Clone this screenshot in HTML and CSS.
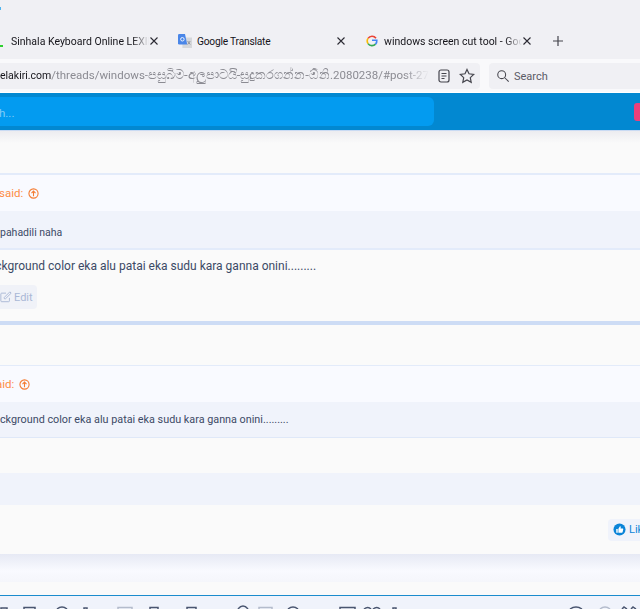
FILE: index.html
```html
<!DOCTYPE html>
<html lang="en">
<head>
  <meta charset="UTF-8">
  <meta name="viewport" content="width=device-width, initial-scale=1.0">
  <title>windows screen cut tool</title>
  <link rel="stylesheet" href="styles.css">
</head>
<body>
  <div class="tabbar">
    <span class="app-dot"></span>
    <div class="tab tab-first">
      <span class="audio-dot"></span>
      <span class="tab-title fade">Sinhala Keyboard Online LEXILOGOS</span>
      <svg class="tab-close" viewBox="0 0 10 10"><path d="M1.500 1.500l7 7M8.500 1.500l-7 7"/></svg>
    </div>
    <div class="tab tab-second">
      <svg class="favicon" viewBox="0 0 16 16">
        <rect x="5" y="4" width="11" height="12" fill="#d5d7db"/>
        <path d="M0 1.500Q0 0 1.500 0H8l2.500 12H1.500Q0 12 0 10.500z" fill="#4a86e8"/>
        <circle cx="5" cy="6" r="2" fill="none" stroke="#fff" stroke-width="1"/>
        <path d="M11 8l3 4M14 8l-3 4" stroke="#8a8d93" stroke-width="1"/>
      </svg>
      <span class="tab-title title-short">Google Translate</span>
      <svg class="tab-close" viewBox="0 0 10 10"><path d="M1.500 1.500l7 7M8.500 1.500l-7 7"/></svg>
    </div>
    <div class="tab tab-third">
      <svg class="favicon favicon-g" viewBox="0 0 16 16" fill="none" stroke-width="2.200">
        <path d="M13.300 4.200A6.500 6.500 0 0 0 2.700 4.500" stroke="#ea4335"/>
        <path d="M2.700 4.500a6.500 6.500 0 0 0 0 7" stroke="#fbbc05"/>
        <path d="M2.700 11.500a6.500 6.500 0 0 0 10 .6" stroke="#34a853"/>
        <path d="M12.700 12.100A6.500 6.500 0 0 0 14.400 7H8" stroke="#4285f4"/>
      </svg>
      <span class="tab-title fade">windows screen cut tool - Google Search</span>
      <svg class="tab-close" viewBox="0 0 10 10"><path d="M1.500 1.500l7 7M8.500 1.500l-7 7"/></svg>
    </div>
    <svg class="new-tab" viewBox="0 0 12 12"><path d="M6 1v10M1 6h10"/></svg>
  </div>

  <div class="toolbar">
    <div class="urlbar">
      <span class="url"><b>elakiri.com</b>/threads/windows-<span class="si">පසුබිම-අලුපාටයි-සුදුකරගන්න-ඕනි</span>.2080238/#post-27</span>
      <svg class="bar-icon" viewBox="0 0 16 16"><rect x="3" y="2" width="10" height="12" rx="2"/><path d="M5.500 5.500h5M5.500 8h5M5.500 10.500h3"/></svg>
      <svg class="bar-icon star" viewBox="0 0 16 16"><path d="M8 1.500l2 4.300 4.700.6-3.400 3.200.9 4.700L8 12l-4.200 2.300.9-4.700L1.300 6.400 6 5.800z"/></svg>
    </div>
    <div class="searchbar">
      <svg class="bar-icon" viewBox="0 0 16 16"><circle cx="6.500" cy="6.500" r="4.500"/><path d="M10 10l4.500 4.500"/></svg>
      <span class="search-label">Search</span>
    </div>
  </div>

  <header class="site-nav">
    <div class="site-search">h...</div>
    <div class="nav-badge"></div>
  </header>

  <main class="page">
    <div class="gap-top"></div>

    <div class="reply-head first">
      <span class="said">said:</span>
      <svg class="up-icon" viewBox="0 0 12 12"><circle cx="6" cy="6" r="5"/><path d="M6 9V3.500M3.800 5.600L6 3.400l2.200 2.200"/></svg>
    </div>
    <div class="quote-line first-quote"><span>pahadili naha</span></div>
    <div class="post-body">
      <p class="post-text">background color eka alu patai eka sudu kara ganna onini.........</p>
      <div class="post-actions">
        <span class="edit-btn">
          <svg viewBox="0 0 14 14"><path d="M11 8v3.500a1 1 0 0 1-1 1H2a1 1 0 0 1-1-1v-8a1 1 0 0 1 1-1h5"/><path d="M5 7.500L11.500 1l1.500 1.500L6.500 9H5z"/></svg>
          Edit
        </span>
      </div>
    </div>
    <div class="post-sep"></div>

    <div class="gap-mid"></div>
    <div class="reply-head second">
      <span class="said">said:</span>
      <svg class="up-icon" viewBox="0 0 12 12"><circle cx="6" cy="6" r="5"/><path d="M6 9V3.500M3.800 5.600L6 3.400l2.200 2.200"/></svg>
    </div>
    <div class="quote-line second-quote"><span>background color eka alu patai eka sudu kara ganna onini.........</span></div>
    <div class="empty-row"></div>
    <div class="tint-row"></div>
    <div class="like-row">
      <span class="like-btn">
        <svg viewBox="0 0 14 14"><circle cx="7" cy="7" r="6.500" fill="#0a84d8"/><path d="M3.500 6.500h1.600v4H3.500zM5.800 10.500V6.300L7.500 3.500c.8 0 1 .7.800 1.500l-.2 1h2.200c.6 0 .8.500.7 1l-.6 2.800c-.1.400-.4.700-.8.700z" fill="#fff"/></svg>
        Like
      </span>
    </div>
    <div class="shadow-band"></div>
    <div class="gap-bottom"></div>
  </main>

  <div class="editor-bar">
    <!-- only the top edge of the editor buttons is in view -->
    <svg class="editor-icons" viewBox="0 0 640 13">
      <path d="M1 13v-1h6v1M24 13v-1.500h11V13M57 13q5-4 10 0M84 13v-1h3v1M150 13v-1.500h8V13M187 13v-1.500h9V13M238 13q5-6 10 0M288 13q5-4 10 0M340 13v-1.500h15V13M364 13q4-3 7 0M373 13q4-3 7 0M393 13v-1h3v1M570 13q6-4 12 0M622 13l2-2 3 2M631 13l2-2 3 2"/>
      <path class="light" d="M118 13v-1.500h14V13M259 13v-1.500h13V13M600 13q5-4 10 0"/>
    </svg>
  </div>
</body>
</html>
```

FILE: styles.css
```css
html, body {
  margin: 0;
  padding: 0;
  height: 609px;
  overflow: hidden;
}

body {
  font-family: Roboto, "Noto Sans", sans-serif;
  background-color: #fafafa;
  color: #3c4a66;
  width: 640px;
}

.tabbar {
  height: 59px;
  background-color: #f0f0f4;
  display: flex;
  align-items: flex-end;
  font-size: 10.500px;
  color: #15141a;
  box-sizing: border-box;
  padding-bottom: 6px;
  position: relative;
}

.app-dot {
  position: absolute;
  left: 0;
  top: 7px;
  width: 1px;
  height: 3px;
  background-color: #4db4f0;
}

.audio-dot {
  position: absolute;
  left: 0;
  top: 45px;
  width: 3px;
  height: 2px;
  background-color: #2fd02f;
}

.tab {
  display: flex;
  align-items: center;
  height: 24px;
  flex: none;
}

.tab-first {
  width: 160px;
  padding-left: 11px;
  box-sizing: border-box;
}

.tab-second {
  width: 187px;
  padding-left: 18px;
  box-sizing: border-box;
}

.tab-third {
  width: 186px;
  padding-left: 19px;
  box-sizing: border-box;
}

.tab-title {
  flex: 1;
  min-width: 0;
  white-space: nowrap;
  overflow: hidden;
}

.title-short {
  font-size: 10.200px;
  letter-spacing: -0.200px;
}

.fade {
  -webkit-mask-image: linear-gradient(to right, #000 88%, transparent);
  mask-image: linear-gradient(to right, #000 88%, transparent);
}

.favicon {
  width: 14px;
  height: 14px;
  margin-right: 5px;
  flex: none;
}

.favicon-g {
  width: 12px;
  height: 12px;
  margin-right: 6px;
}

.tab-close {
  width: 10px;
  height: 10px;
  flex: none;
  fill: none;
  stroke: #2b2a33;
  stroke-width: 1.100;
  margin-right: 1px;
}

.new-tab {
  width: 12px;
  height: 12px;
  margin: 0 0 6px 19px;
  fill: none;
  stroke: #45454d;
  stroke-width: 1.200;
}

.toolbar {
  height: 33px;
  background-color: #f9f9fb;
  display: flex;
  align-items: center;
  gap: 9px;
  border-bottom: 1px solid #fff;
  box-sizing: content-box;
  font-size: 11px;
}

.urlbar {
  width: 480px;
  height: 26px;
  background-color: #f0f0f4;
  border-radius: 0 4px 4px 0;
  display: flex;
  align-items: center;
  flex: none;
  padding-right: 5px;
  box-sizing: border-box;
}

.url {
  flex: 1;
  min-width: 0;
  white-space: nowrap;
  overflow: hidden;
  color: #8b8b92;
  font-size: 11.500px;
  line-height: 18px;
  -webkit-mask-image: linear-gradient(to right, #000 94%, transparent);
  mask-image: linear-gradient(to right, #000 94%, transparent);
}

.url b {
  font-weight: normal;
  font-size: 10.500px;
  color: #15141a;
}

.si {
  font-size: 13.200px;
}

.bar-icon {
  width: 16px;
  height: 16px;
  flex: none;
  fill: none;
  stroke: #45454d;
  stroke-width: 1.200;
  margin-left: 7px;
}

.bar-icon.star {
  margin-left: 7px;
}

.searchbar {
  flex: 1;
  height: 26px;
  background-color: #f0f0f4;
  border-radius: 4px 0 0 4px;
  display: flex;
  align-items: center;
  gap: 4px;
  color: #5b5b66;
}

.search-label {
  padding-top: 1px;
}

.searchbar .bar-icon {
  width: 14px;
  height: 14px;
}

.site-nav {
  height: 37px;
  background-color: #0288d1;
  display: flex;
  align-items: center;
  justify-content: space-between;
  border-bottom: 1px solid #c9daf3;
}

.site-search {
  width: 434px;
  height: 29px;
  line-height: 32px;
  background-color: #039bf0;
  border-radius: 0 6px 6px 0;
  color: #82cdf6;
  font-size: 11.500px;
  box-sizing: border-box;
  text-indent: -1px;
}

.nav-badge {
  width: 6px;
  height: 18px;
  background-color: #ec407a;
  border-radius: 3px 0 0 3px;
}

.page {
  display: flex;
  flex-direction: column;
}

.gap-top {
  height: 42px;
  background: linear-gradient(#ececf0, #fafafa 12px);
}

.reply-head {
  height: 36px;
  background-color: #f9faff;
  border-top: 2px solid #e3ebfa;
  display: flex;
  align-items: center;
  gap: 5px;
  color: #fe8c46;
  font-size: 11.500px;
}

.reply-head.first {
  margin-left: -1px;
}

.reply-head.second {
  border-top-width: 1px;
  margin-left: -10px;
}

.up-icon {
  width: 11px;
  height: 11px;
  fill: none;
  stroke: #f57c33;
  stroke-width: 1.200;
}

.quote-line {
  background-color: #f0f3fb;
  font-size: 10.500px;
  display: flex;
  align-items: center;
  white-space: nowrap;
}

.first-quote {
  height: 32px;
  padding-top: 5px;
  border-bottom: 2px solid #e3ebfa;
}

.second-quote {
  height: 35px;
  font-size: 10.800px;
  border-bottom: 1px solid #dfe8f8;
  text-indent: -12px;
}

.post-body {
  height: 71px;
  display: flex;
  flex-direction: column;
}

.post-text {
  margin: 7px 0 0 -18px;
  font-size: 12px;
  line-height: 18px;
  white-space: nowrap;
}

.post-actions {
  margin-top: 10px;
}

.edit-btn {
  display: inline-flex;
  align-items: center;
  gap: 2px;
  height: 24px;
  width: 37px;
  background-color: #f0f2f8;
  border-radius: 0 4px 4px 0;
  color: #aab8d6;
  font-size: 11px;
}

.edit-btn svg {
  width: 12px;
  height: 12px;
  fill: none;
  stroke: #aab8d6;
  stroke-width: 1.100;
  flex: none;
}

.post-sep {
  height: 4px;
  background-color: #cddcf5;
}

.gap-mid {
  height: 40px;
}

.empty-row {
  height: 35px;
}

.tint-row {
  height: 32px;
  background-color: #f0f3fb;
}

.like-row {
  height: 49px;
  display: flex;
  justify-content: flex-end;
  align-items: center;
  overflow: hidden;
}

.like-btn {
  display: flex;
  align-items: center;
  gap: 3px;
  flex: none;
  width: 32px;
  height: 22px;
  padding-left: 5px;
  box-sizing: border-box;
  background-color: #f0f3fb;
  border-radius: 4px 0 0 4px;
  color: #0a84d8;
  font-size: 11px;
  overflow: hidden;
  white-space: nowrap;
}

.like-btn svg {
  width: 13px;
  height: 13px;
  flex: none;
}

.shadow-band {
  height: 28px;
  background: linear-gradient(#e6e9f4, #f9faff 60%, #f5f6fb);
}

.gap-bottom {
  height: 13px;
  border-bottom: 1px solid #1b8ccd;
}

.editor-bar {
  height: 13px;
  background-color: #f0f3fb;
}

.editor-icons {
  display: block;
  width: 640px;
  height: 13px;
  fill: none;
  stroke: #4a5670;
  stroke-width: 1.500;
}

.editor-icons .light {
  stroke: #b4bccc;
}
```
